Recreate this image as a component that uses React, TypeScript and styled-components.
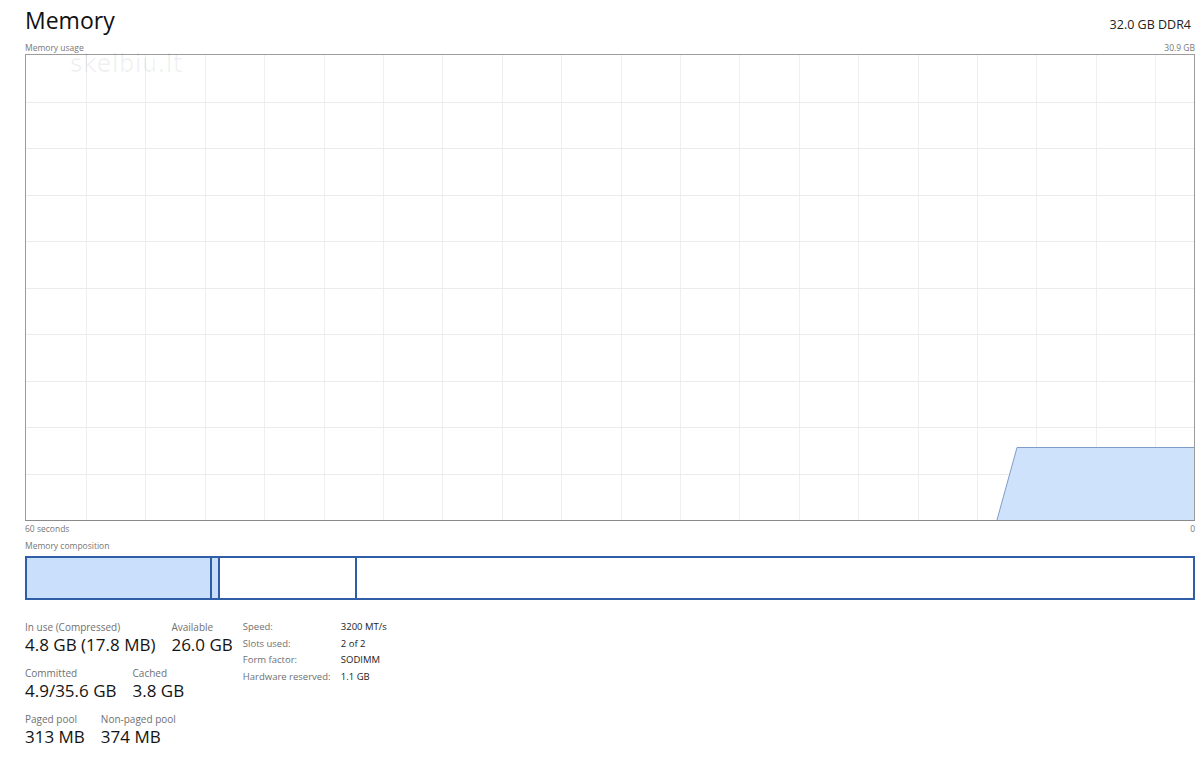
import React from "react";
import styled, { createGlobalStyle } from "styled-components";

const GlobalStyle = createGlobalStyle`
  html, body { margin: 0; padding: 0; background: #ffffff; }
  body { font-family: "Open Sans", "Noto Sans", sans-serif; color: #1b1b1b; }
  * { box-sizing: border-box; }
`;

const Page = styled.div`
  position: relative;
  width: 1200px;
  height: 759px;
  padding: 0 5px 0 25px;
  overflow: hidden;
`;

const Header = styled.div`
  display: flex;
  justify-content: space-between;
  align-items: baseline;
  padding-top: 5px;
  height: 35px;
`;

const Title = styled.div`
  font-size: 23px;
  line-height: 30px;
  font-weight: 400;
  color: #111;
`;

const Spec = styled.div`
  font-size: 12.5px;
  line-height: 30px;
  color: #222;
  padding-right: 4px;
`;

const CaptionRow = styled.div<{ $top: number }>`
  display: flex;
  justify-content: space-between;
  font-size: 8.5px;
  line-height: 12px;
  height: 12px;
  color: #777;
  margin-top: ${(p) => p.$top}px;
`;

const Chart = styled.div`
  position: relative;
  height: 467px;
  border: 1px solid #9c9c9c;
  border-bottom-color: #8a8a8a;
  background: #fff;
`;

const Watermark = styled.div`
  position: absolute;
  left: 70px;
  top: 55px;
  font-family: "DejaVu Sans", sans-serif;
  font-size: 24px;
  line-height: 18px;
  letter-spacing: 0.5px;
  color: rgba(0, 0, 0, 0.06);
  pointer-events: none;
`;

const CompBar = styled.div`
  display: flex;
  height: 44px;
  margin-top: 4px;
  border: 2px solid #2f5ea6;
`;

const Segment = styled.div<{ $w?: number; $fill?: boolean; $edge?: boolean }>`
  ${(p) => (p.$w ? `width: ${p.$w}px;` : "flex: 1;")}
  background: ${(p) => (p.$fill ? "#cadffb" : "#ffffff")};
  border-right: ${(p) => (p.$edge ? "2px solid #2f5ea6" : "none")};
`;

const Stats = styled.div`
  display: flex;
  align-items: flex-start;
  gap: 10px;
  margin-top: 20px;
`;

const StatColumn = styled.div`
  display: flex;
  flex-direction: column;
  gap: 10px;
`;

const StatRow = styled.div`
  display: flex;
  gap: 16px;
`;

const Stat = styled.div`
  display: flex;
  flex-direction: column;
`;

const StatLabel = styled.div`
  font-size: 10px;
  line-height: 14px;
  color: #707070;
  white-space: nowrap;
`;

const StatValue = styled.div`
  font-size: 17px;
  line-height: 22px;
  color: #141414;
  white-space: nowrap;
`;

const Props = styled.div`
  display: grid;
  grid-template-columns: 98px auto;
  grid-auto-rows: 16.7px;
  align-content: start;
  margin-top: -1px;
`;

const PropLabel = styled.div`
  font-size: 9.5px;
  line-height: 16.7px;
  color: #707070;
  white-space: nowrap;
`;

const PropValue = styled.div`
  font-size: 9.5px;
  line-height: 16.7px;
  color: #222;
  white-space: nowrap;
`;

const W = 1168;
const H = 465;

function Graph() {
  const vLines: number[] = [];
  for (let x = 60; x < W; x += 59.4) vLines.push(Math.round(x) + 0.5);
  const hLines: number[] = [];
  for (let i = 1; i < 10; i++) hLines.push(Math.round(i * 46.5) + 0.5);
  return (
    <svg width={W} height={H} style={{ display: "block" }}>
      {vLines.map((x) => (
        <line key={"v" + x} x1={x} y1={0} x2={x} y2={H} stroke="#efefef" strokeWidth={1} />
      ))}
      {hLines.map((y) => (
        <line key={"h" + y} x1={0} y1={y} x2={W} y2={y} stroke="#ebebeb" strokeWidth={1} />
      ))}
      <polygon points={`971,${H} 991,392.5 ${W},392.5 ${W},${H}`} fill="#cadffb" fillOpacity={0.92} />
      <polyline points={`971,${H} 991,392.5 ${W},392.5`} fill="none" stroke="#7f9cc8" strokeWidth={1} />
    </svg>
  );
}

export default function App() {
  return (
    <>
      <GlobalStyle />
      <Page>
        <Header>
          <Title>Memory</Title>
          <Spec>32.0 GB DDR4</Spec>
        </Header>
        <CaptionRow $top={7}>
          <span>Memory usage</span>
          <span>30.9 GB</span>
        </CaptionRow>
        <Chart>
          <Graph />
        </Chart>
        <CaptionRow $top={2}>
          <span>60 seconds</span>
          <span>0</span>
        </CaptionRow>
        <CaptionRow $top={5}>
          <span>Memory composition</span>
        </CaptionRow>
        <CompBar>
          <Segment $w={185} $fill $edge />
          <Segment $w={8} $fill $edge />
          <Segment $w={137} $edge />
          <Segment />
        </CompBar>
        <Stats>
          <StatColumn>
            <StatRow>
              <Stat>
                <StatLabel>In use (Compressed)</StatLabel>
                <StatValue>4.8 GB (17.8 MB)</StatValue>
              </Stat>
              <Stat>
                <StatLabel>Available</StatLabel>
                <StatValue>26.0 GB</StatValue>
              </Stat>
            </StatRow>
            <StatRow>
              <Stat>
                <StatLabel>Committed</StatLabel>
                <StatValue>4.9/35.6 GB</StatValue>
              </Stat>
              <Stat>
                <StatLabel>Cached</StatLabel>
                <StatValue>3.8 GB</StatValue>
              </Stat>
            </StatRow>
            <StatRow>
              <Stat>
                <StatLabel>Paged pool</StatLabel>
                <StatValue>313 MB</StatValue>
              </Stat>
              <Stat>
                <StatLabel>Non-paged pool</StatLabel>
                <StatValue>374 MB</StatValue>
              </Stat>
            </StatRow>
          </StatColumn>
          <Props>
            <PropLabel>Speed:</PropLabel>
            <PropValue>3200 MT/s</PropValue>
            <PropLabel>Slots used:</PropLabel>
            <PropValue>2 of 2</PropValue>
            <PropLabel>Form factor:</PropLabel>
            <PropValue>SODIMM</PropValue>
            <PropLabel>Hardware reserved:</PropLabel>
            <PropValue>1.1 GB</PropValue>
          </Props>
        </Stats>
        <Watermark>skelbiu.lt</Watermark>
      </Page>
    </>
  );
}
